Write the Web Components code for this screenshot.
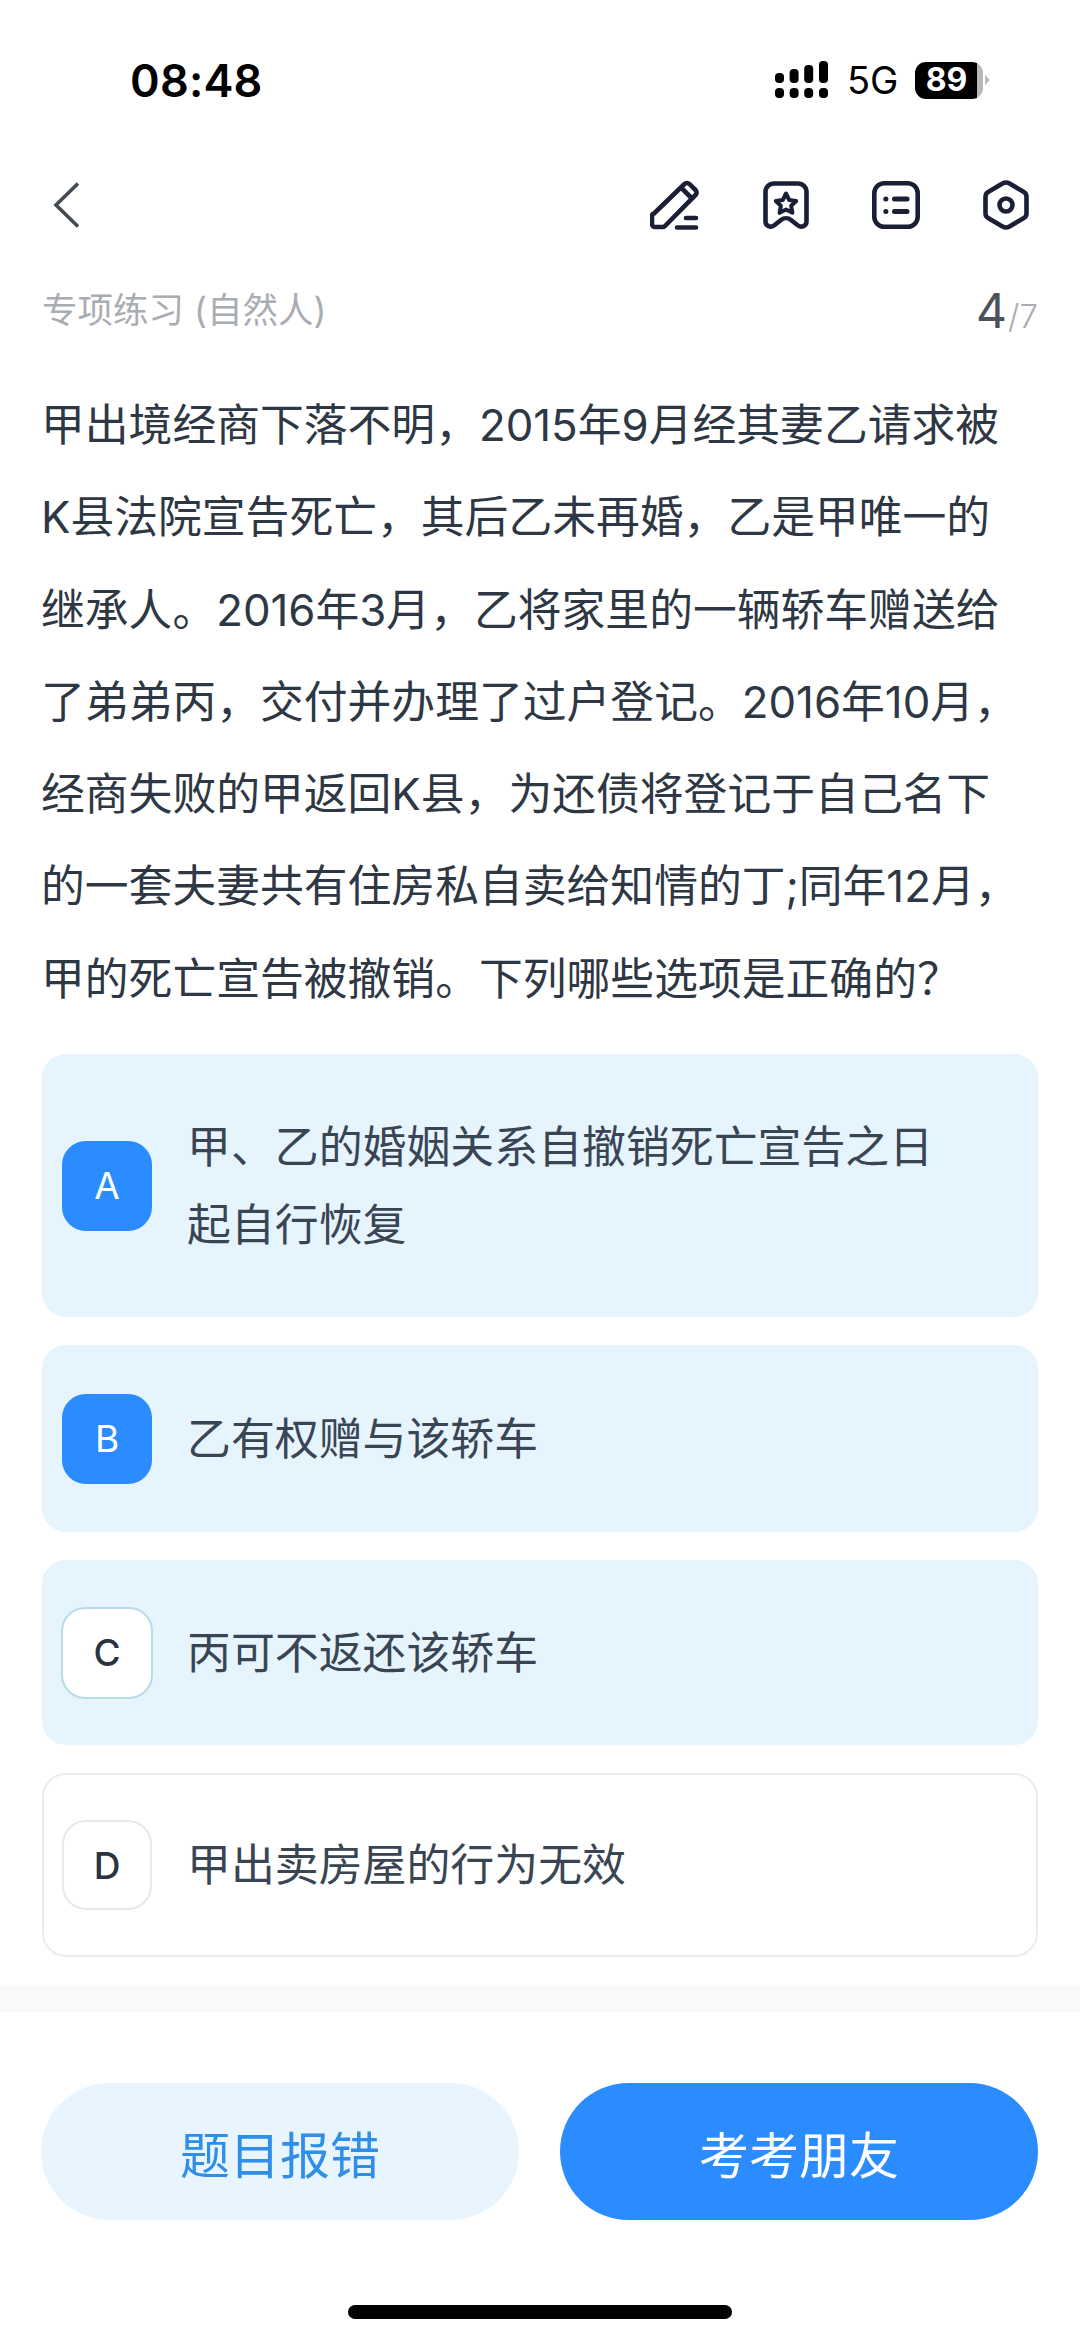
<!DOCTYPE html>
<html lang="zh-CN">
<head>
<meta charset="utf-8">
<title>专项练习</title>
<style>
html,body{margin:0;padding:0;background:#fff}
body{font-family:"Inter","Noto Sans CJK SC",sans-serif}
</style>
</head>
<body>
<app-screen>
  <status-bar time="08:48" net="5G" level="89"></status-bar>
  <nav-bar></nav-bar>
  <meta-row current="4" total="/7">专项练习 (自然人)</meta-row>
  <question-text>甲出境经商下落不明，2015年9月经其妻乙请求被<br>K县法院宣告死亡，其后乙未再婚，乙是甲唯一的<br>继承人。2016年3月，乙将家里的一辆轿车赠送给<br>了弟弟丙，交付并办理了过户登记。2016年10月，<br>经商失败的甲返回K县，为还债将登记于自己名下<br>的一套夫妻共有住房私自卖给知情的丁;同年12月，<br>甲的死亡宣告被撤销。下列哪些选项是正确的？</question-text>
  <option-list>
    <option-card letter="A" state="selected" style="--h:263px">甲、乙的婚姻关系自撤销死亡宣告之日<br>起自行恢复</option-card>
    <option-card letter="B" state="selected" style="--h:187px">乙有权赠与该轿车</option-card>
    <option-card letter="C" state="tinted" style="--h:185px">丙可不返还该轿车</option-card>
    <option-card letter="D" style="--h:184px">甲出卖房屋的行为无效</option-card>
  </option-list>
  <action-bar first="题目报错" second="考考朋友"></action-bar>
  <home-indicator></home-indicator>
</app-screen>
<script>
const def=(name,render)=>customElements.define(name,class extends HTMLElement{
  connectedCallback(){
    if(this.shadowRoot)return;
    this.attachShadow({mode:'open'}).innerHTML=render(this);
  }
});
def('app-screen',()=>`<style>
:host{display:flex;flex-direction:column;width:1080px;height:2341px;background:#fff;overflow:hidden}
</style><slot></slot>`);

def('status-bar',e=>`<style>
:host{display:flex;align-items:center;height:140px;box-sizing:border-box;padding:20px 90px 0 130px;color:#000;justify-content:space-between}
.t{font:600 45px/1 "Inter",sans-serif;letter-spacing:.2px}
.r{display:flex;align-items:center}
svg{display:block}
.n{font:400 38px/1 "Inter",sans-serif;margin:0 18px 0 19px;width:50px}
.b{display:flex;align-items:center;justify-content:center;width:68px;height:37px;border-radius:11px;background:linear-gradient(90deg,#000 62px,#b9b9b9 62px);font:700 32px/1 "Inter",sans-serif;color:#fff;box-sizing:border-box;padding-right:5px}
.nub{width:5px;height:10px;margin-left:2px;background:#b9b9b9;clip-path:polygon(0 0,100% 50%,0 100%)}
</style>
<span class="t">${e.getAttribute('time')}</span>
<span class="r">
<svg width="53" height="38" viewBox="0 0 53 38" fill="#000">
<rect x="0" y="12" width="9" height="10" rx="4"/><rect x="14.6" y="8" width="9" height="14" rx="4"/><rect x="29.2" y="4" width="9" height="18" rx="4"/><rect x="44" y="0" width="9" height="22" rx="4"/>
<rect x="0" y="27" width="9" height="10" rx="4"/><rect x="14.6" y="27" width="9" height="10" rx="4"/><rect x="29.2" y="27" width="9" height="10" rx="4"/><rect x="44" y="27" width="9" height="10" rx="4"/>
</svg>
<span class="n">${e.getAttribute('net')}</span>
<span class="b">${e.getAttribute('level')}</span><span class="nub"></span>
</span>`);

def('nav-bar',()=>`<style>
:host{display:flex;align-items:center;justify-content:space-between;height:130px;box-sizing:border-box;padding:0 51px 0 53px}
svg{display:block;fill:none;stroke:#1a1f36;stroke-width:4.6;stroke-linecap:round;stroke-linejoin:round}
.i{display:flex;align-items:center}
.back{stroke:#444a52;stroke-width:3.6;stroke-linecap:butt;stroke-linejoin:miter}
</style>
<svg class="back" width="27" height="46" viewBox="0 0 27 46"><path d="M25 1.5 3 23l22 21.5"/></svg>
<span class="i">
<svg width="50" height="50" viewBox="0 0 50 50"><path d="M4 33.5 34.5 4a3.5 3.5 0 0 1 5 0l6 6a3.5 3.5 0 0 1 0 5L15 46a3 3 0 0 1-2 1H5a3 3 0 0 1-3-3v-7a3 3 0 0 1 2-3.500Z"/><path d="M32 8.500 41.500 18M36 38h10M27 47.500h19"/></svg>
<svg style="margin-left:63px" width="46" height="48" viewBox="0 0 46 48"><path d="M11 2.500h24a8.500 8.500 0 0 1 8.500 8.500v29.500c0 4.500-5 6.500-8.500 4l-7-5.500c-3-2.400-7-2.400-10 0l-7 5.500c-3.500 2.500-8.500.5-8.500-4V11A8.500 8.500 0 0 1 11 2.500Z"/><path stroke-width="4" d="M23 12.500l3.200 6.500 7 1-5 4.800 1.200 7-6.400-3.300-6.400 3.300 1.200-7-5-4.800 7-1Z"/></svg>
<svg style="margin-left:63px" width="48" height="48" viewBox="0 0 48 48"><rect x="2.300" y="2.300" width="43.400" height="43.400" rx="10"/><path stroke-width="5" d="M22.500 18H35M22.500 30.500H35M13.800 18h.1M13.800 30.500h.1"/></svg>
<svg style="margin-left:63px" width="46" height="50" viewBox="0 0 46 50"><path d="M19.500 3.500a7 7 0 0 1 7 0l14 8.200a5.500 5.500 0 0 1 3 4.800v17a5.500 5.500 0 0 1-3 4.800l-14 8.200a7 7 0 0 1-7 0l-14-8.200a5.500 5.500 0 0 1-3-4.800v-17a5.500 5.500 0 0 1 3-4.800Z"/><circle cx="23" cy="25" r="6.500"/></svg>
</span>`);

def('meta-row',e=>`<style>
:host{display:flex;align-items:center;justify-content:space-between;height:50px;margin-top:16px;box-sizing:border-box;padding:0 42px;font:400 35.500px/1 "Inter","Noto Sans CJK SC",sans-serif;color:#a9adb2}
.c{font:400 48px/1 "Inter",sans-serif;color:#4a525c}
.s{font:300 33px/1 "Inter",sans-serif;color:#a9adb2;margin-left:1px}
</style><span><slot></slot></span><span><span class="c">${e.getAttribute('current')}</span><span class="s">${e.getAttribute('total')}</span></span>`);

def('question-text',()=>`<style>
:host{display:block;margin-top:44px;padding:0 42px 0 41px;font:400 43.800px/92.300px "Inter","Noto Sans CJK SC",sans-serif;color:#2e3744;white-space:nowrap}
</style><slot></slot>`);

def('option-list',()=>`<style>
:host{display:flex;flex-direction:column;gap:28px;margin:28px 42px 0}
</style><slot></slot>`);

def('option-card',e=>`<style>
:host{display:flex;align-items:center;height:var(--h);box-sizing:border-box;padding-left:20px;border-radius:24px;border:2px solid #ececee;background:#fff;font:400 43.900px/78px "Inter","Noto Sans CJK SC",sans-serif;color:#3a4554;white-space:nowrap}
:host([state]){background:#e6f4fe;border-color:#e6f4fe}
.b{flex:none;display:flex;align-items:center;justify-content:center;width:90px;height:90px;box-sizing:border-box;margin-left:-2px;margin-right:35px;border-radius:24px;border:2px solid #e8e8ea;background:#fff;font:500 37px/1 "Inter",sans-serif;color:#2b3342}
:host([state=selected]) .b{background:#2b8cff;border-color:#2b8cff;color:#fff;font-weight:400}
:host([state=tinted]) .b{width:92px;height:92px;margin-left:-3px;margin-right:34px;border-color:#b8dbe8}
</style><span class="b">${e.getAttribute('letter')}</span><span><slot></slot></span>`);

def('action-bar',e=>`<style>
:host{display:flex;flex-direction:column;margin-top:29px}
.d{height:26px;background:#f7f9fa}
.r{display:flex;gap:41px;padding:71px 42px 0 41px}
.btn{flex:1;height:137px;border-radius:68.500px;display:flex;align-items:center;justify-content:center;font:400 50px/1 "Noto Sans CJK SC",sans-serif}
.a{background:#e8f5fe;color:#2f8ee8}
.p{background:#2b8cff;color:#fff}
</style><div class="d"></div><div class="r"><span class="btn a">${e.getAttribute('first')}</span><span class="btn p">${e.getAttribute('second')}</span></div>`);

def('home-indicator',()=>`<style>
:host{display:block;width:384px;height:14px;margin:85px auto 0;border-radius:7px;background:#000}
</style>`);
</script>
</body>
</html>
